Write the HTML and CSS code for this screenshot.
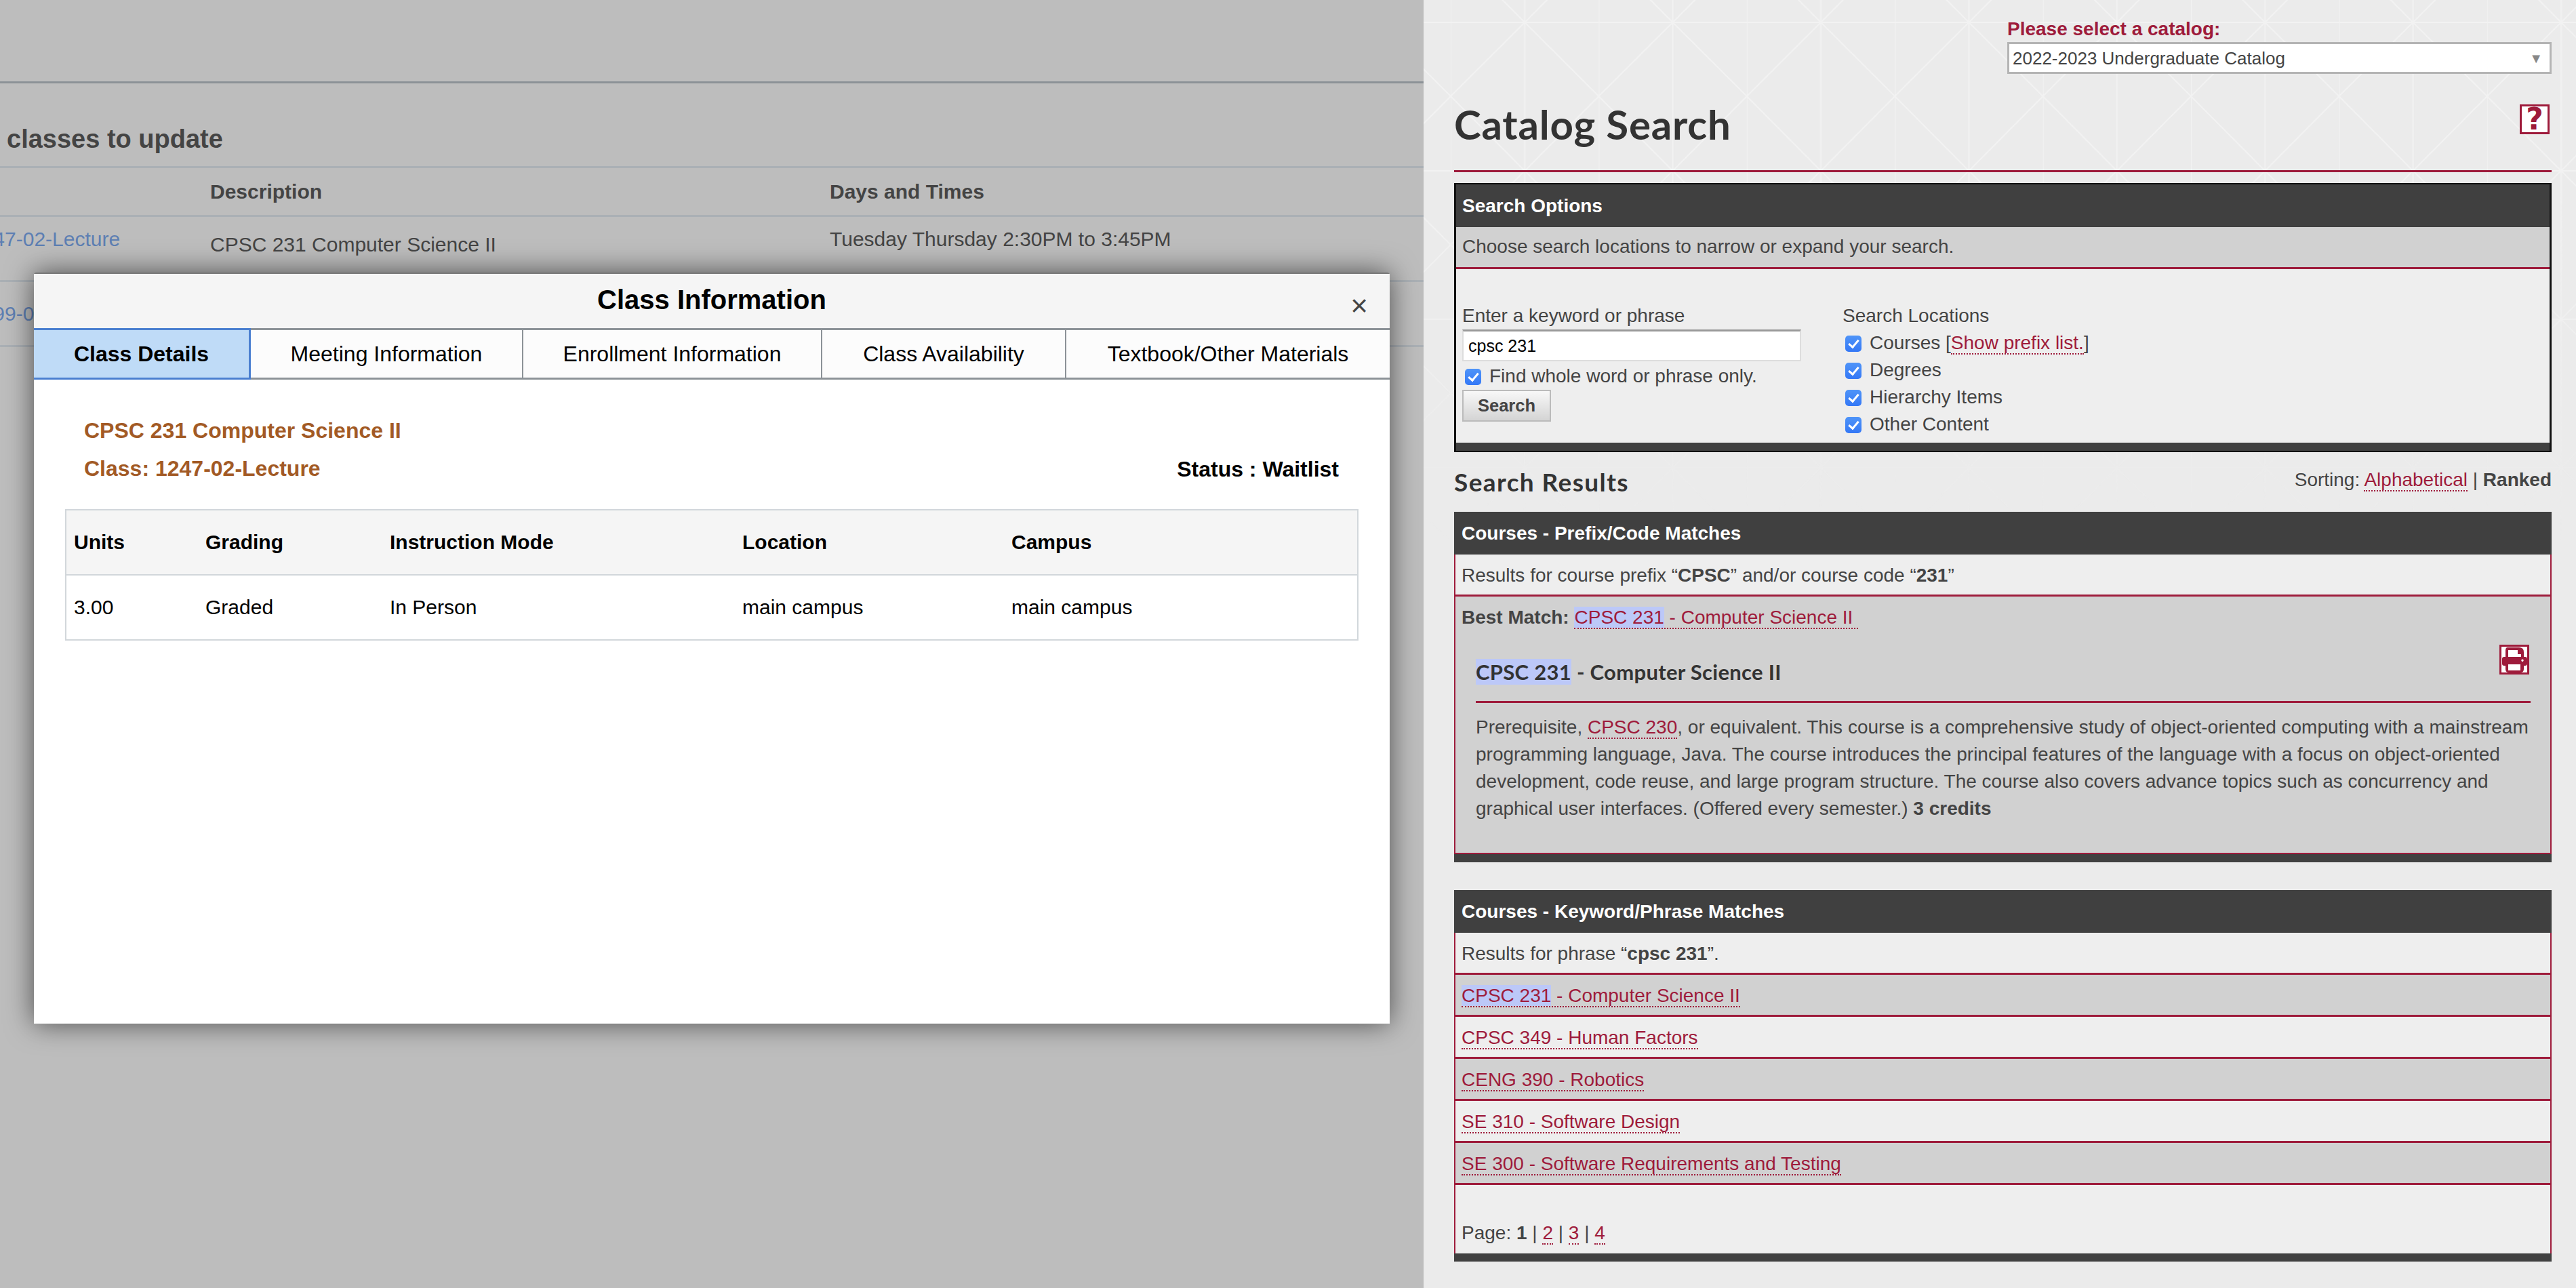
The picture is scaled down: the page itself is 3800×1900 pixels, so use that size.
FILE: index.html

```html
<!DOCTYPE html>
<html lang="en">
<head>
<meta charset="utf-8"/>
<title>Catalog Search</title>
<link rel="stylesheet" href="styles.css">
</head>
<body>
<div class="page">

  <!-- dimmed registration page behind the dialog -->
  <section class="schedule">
    <div class="schedule-top"></div>
    <h2 class="schedule-title">classes to update</h2>
    <div class="schedule-row schedule-head">
      <span></span>
      <span>Description</span>
      <span>Days and Times</span>
    </div>
    <div class="schedule-row schedule-first">
      <a>1247-02-Lecture</a>
      <span class="desc">CPSC 231 Computer Science II</span>
      <span>Tuesday Thursday 2:30PM to 3:45PM</span>
    </div>
    <div class="schedule-row">
      <a>1099-02-Lecture</a>
    </div>

    <div class="modal">
      <div class="modal-head">
        <h3>Class Information</h3>
        <span class="modal-close">×</span>
      </div>
      <div class="tabs">
        <div class="tab active">Class Details</div>
        <div class="tab">Meeting Information</div>
        <div class="tab">Enrollment Information</div>
        <div class="tab">Class Availability</div>
        <div class="tab">Textbook/Other Materials</div>
      </div>
      <div class="modal-body">
        <div class="class-name">CPSC 231 Computer Science II</div>
        <div class="class-line">
          <div class="class-name">Class: 1247-02-Lecture</div>
          <div class="class-status">Status : Waitlist</div>
        </div>
        <table class="details">
          <thead>
            <tr><th>Units</th><th>Grading</th><th>Instruction Mode</th><th>Location</th><th>Campus</th></tr>
          </thead>
          <tbody>
            <tr><td>3.00</td><td>Graded</td><td>In Person</td><td>main campus</td><td>main campus</td></tr>
          </tbody>
        </table>
      </div>
    </div>
  </section>

  <!-- catalog sidebar -->
  <aside class="catalog">
    <svg class="catalog-bg" width="1700" height="800" aria-hidden="true">
      <defs>
        <pattern id="mesh" width="218.4" height="219" patternUnits="userSpaceOnUse" x="40" y="-77">
          <g stroke="#f2f2f2" stroke-width="2" fill="none">
            <path d="M0 0H218.4M0 110H218.4M0 0V219M109.2 0V219"/>
            <path d="M0 0L109.2 110L0 219M218.4 0L109.2 110L218.4 219"/>
          </g>
        </pattern>
      </defs>
      <rect width="1700" height="800" fill="url(#mesh)"/>
    </svg>

    <div class="catalog-pick">
      <label>Please select a catalog:</label>
      <div class="fake-select"><span>2022-2023 Undergraduate Catalog</span><i>▼</i></div>
    </div>

    <div class="title-row">
      <h1>Catalog Search</h1>
      <span class="icon-box help">?</span>
    </div>

    <div class="panel panel-options">
      <div class="panel-head">Search Options</div>
      <div class="row row-grey">Choose search locations to narrow or expand your search.</div>
      <div class="options">
        <div class="options-left">
          <div class="line">Enter a keyword or phrase</div>
          <input class="keyword" type="text" value="cpsc 231">
          <label class="line check"><input type="checkbox" checked>Find whole word or phrase only.</label>
          <button class="btn">Search</button>
        </div>
        <div class="options-right">
          <div class="line">Search Locations</div>
          <label class="line check"><input type="checkbox" checked><span>Courses [<a class="lnk">Show prefix list.</a>]</span></label>
          <label class="line check"><input type="checkbox" checked>Degrees</label>
          <label class="line check"><input type="checkbox" checked>Hierarchy Items</label>
          <label class="line check"><input type="checkbox" checked>Other Content</label>
        </div>
      </div>
      <div class="panel-foot"></div>
    </div>

    <div class="results-head">
      <h2>Search Results</h2>
      <div class="sorting">Sorting: <a class="lnk">Alphabetical</a> | <strong>Ranked</strong></div>
    </div>

    <div class="panel">
      <div class="panel-head">Courses - Prefix/Code Matches</div>
      <div class="row">Results for course prefix “<strong>CPSC</strong>” and/or course code “<strong>231</strong>”</div>
      <div class="best">
        <div class="best-line"><strong>Best Match:</strong> <a class="lnk"><mark>CPSC 231</mark> - Computer Science II&nbsp;</a></div>
        <div class="course">
          <div class="course-head">
            <h4><mark>CPSC 231</mark> - Computer Science II</h4>
            <span class="icon-box print">
              <svg width="38" height="38" viewBox="0 0 38 38"><path fill="#9e1b3b" fill-rule="evenodd" d="M9 1H26Q33 1 33 8V15H35Q38 15 38 18V25Q38 28 35 28H33V33Q33 38 28 38H11Q6 38 6 33V28H4Q1 28 1 25V18Q1 15 4 15H6V6Q6 1 9 1ZM10 5V15H29V11H24V5ZM10 26V35H28V26ZM31 18.5A1.7 1.7 0 1 0 31.01 18.5Z"/></svg>
            </span>
          </div>
          <p>Prerequisite, <a class="lnk">CPSC 230</a>, or equivalent. This course is a comprehensive study of object-oriented computing with a mainstream programming language, Java. The course introduces the principal features of the language with a focus on object-oriented development, code reuse, and large program structure. The course also covers advance topics such as concurrency and graphical user interfaces. (Offered every semester.) <strong>3 credits</strong></p>
        </div>
      </div>
      <div class="panel-foot"></div>
    </div>

    <div class="panel panel-keyword">
      <div class="panel-head">Courses - Keyword/Phrase Matches</div>
      <div class="row">Results for phrase “<strong>cpsc 231</strong>”.</div>
      <div class="row row-grey"><a class="lnk"><mark>CPSC 231</mark> - Computer Science II</a></div>
      <div class="row"><a class="lnk">CPSC 349 - Human Factors</a></div>
      <div class="row row-grey"><a class="lnk">CENG 390 - Robotics</a></div>
      <div class="row"><a class="lnk">SE 310 - Software Design</a></div>
      <div class="row row-grey"><a class="lnk">SE 300 - Software Requirements and Testing</a></div>
      <div class="pager">Page: <strong>1</strong> | <a class="lnk">2</a> | <a class="lnk">3</a> | <a class="lnk">4</a></div>
      <div class="panel-foot"></div>
    </div>
  </aside>
</div>
</body>
</html>
```

FILE: styles.css

```css
html, body {
  margin: 0;
  height: 100%;
  overflow: hidden;
}
body {
  font-family: "Liberation Sans", Arial, sans-serif;
  font-size: 28px;
  color: #444;
}
.page {
  display: flex;
  width: 3800px;
  height: 1900px;
}

/* left side */
.schedule {
  position: relative;
  width: 2100px;
  flex: none;
  background: #bdbdbd;
  overflow: hidden;
}
.schedule-top {
  height: 120px;
  border-bottom: 3px solid #8c9297;
}
.schedule-title {
  margin: 0;
  padding: 60px 0 0 10px;
  height: 62px;
  font-size: 38px;
  line-height: 44px;
  color: #444;
}
.schedule-row {
  display: grid;
  grid-template-columns: 353px 914px 1fr;
  margin-left: -43px;
  height: 93px;
  border-bottom: 3px solid #aab0b5;
  align-items: center;
  font-size: 30px;
}
.schedule-row a { color: #5d7fb3; }
.schedule-head {
  height: 69px;
  border-top: 3px solid #aab0b5;
  font-weight: bold;
}
.schedule-first { align-items: start; }
.schedule-first > * { margin-top: 16px; }
.schedule-first .desc { margin-top: 24px; }

/* dialog */
.modal {
  position: absolute;
  left: 50px;
  top: 402px;
  width: 2000px;
  height: 1106px;
  background: #fff;
  border-top: 2px solid #777;
  border-radius: 4px 4px 0 0;
  box-shadow: 0 0 40px rgba(0, 0, 0, 0.6);
}
.modal-head {
  position: relative;
  height: 80px;
  background: #f5f5f5;
  text-align: center;
}
.modal-head h3 {
  margin: 0;
  font-size: 40px;
  line-height: 77px;
  color: #000;
}
.modal-close {
  position: absolute;
  right: 32px;
  top: 22px;
  font-size: 44px;
  line-height: 50px;
  color: #444;
}
.tabs {
  display: flex;
  height: 70px;
  border-top: 3px solid #8c9297;
  border-bottom: 3px solid #8c9297;
  background: #fcfcfc;
}
.tab {
  display: flex;
  align-items: center;
  justify-content: center;
  box-sizing: border-box;
  font-size: 32px;
  color: #000;
  border-right: 2px solid #8c9297;
}
.tab:nth-child(1) { width: 320px; }
.tab:nth-child(2) { width: 402px; }
.tab:nth-child(3) { width: 441px; }
.tab:nth-child(4) { width: 360px; }
.tab:nth-child(5) { width: 477px; border-right: 0; }
.tab.active {
  margin: -3px 0;
  background: #bfdbf7;
  border: 3px solid #4a7fd0;
  border-left: 0;
  font-weight: bold;
}
.modal-body { padding: 47px 46px 0; }
.class-name {
  font-size: 32px;
  font-weight: bold;
  line-height: 56px;
  padding-left: 28px;
  color: #a25a25;
}
.class-line {
  display: flex;
  justify-content: space-between;
}
.class-status {
  padding-right: 29px;
  font-size: 32px;
  font-weight: bold;
  line-height: 58px;
  color: #000;
}
.details {
  width: 1908px;
  margin-top: 30px;
  border-collapse: collapse;
  table-layout: fixed;
  font-size: 30px;
  color: #000;
}
.details th, .details td {
  height: 94px;
  padding: 0 0 0 11px;
  text-align: left;
  border: 2px solid #d2d7db;
  border-left: 0;
  border-right: 0;
}
.details th { background: #f5f5f5; }
.details tr > :first-child { border-left: 2px solid #d2d7db; }
.details tr > :last-child { border-right: 2px solid #d2d7db; }
.details th:nth-child(1) { width: 183px; }
.details th:nth-child(2) { width: 261px; }
.details th:nth-child(3) { width: 509px; }
.details th:nth-child(4) { width: 386px; }

/* right side */
.catalog {
  position: relative;
  flex: 1;
  padding: 0 36px 0 45px;
  background: #ebebeb;
  overflow: hidden;
}
.catalog-bg {
  position: absolute;
  left: 0;
  top: 0;
  -webkit-mask-image: linear-gradient(#000 35%, transparent);
  mask-image: linear-gradient(#000 35%, transparent);
}
.catalog > :not(svg) { position: relative; }
.catalog-pick {
  margin-left: 816px;
  padding-top: 27px;
}
.catalog-pick label {
  display: block;
  height: 35px;
  line-height: 32px;
  font-weight: bold;
  color: #9e1b3b;
}
.fake-select {
  box-sizing: border-box;
  display: flex;
  justify-content: space-between;
  align-items: center;
  height: 47px;
  padding: 2px 10px 0 5px;
  background: #fff;
  border: 3px solid #b4b4b4;
  font-size: 26px;
}
.fake-select i {
  font-style: normal;
  font-size: 20px;
  color: #888;
}
.title-row {
  display: flex;
  justify-content: space-between;
  align-items: flex-start;
  height: 142px;
  border-bottom: 3px solid #9e1b3b;
}
.title-row h1 {
  margin: 0;
  padding-top: 39px;
  font-family: Lato, sans-serif;
  font-size: 60px;
  letter-spacing: 0.8px;
  line-height: 70px;
  font-weight: 700;
  color: #333;
}
.icon-box {
  box-sizing: border-box;
  display: flex;
  align-items: center;
  justify-content: center;
  width: 44px;
  height: 44px;
  background: #fff;
  border: 3px solid #9e1b3b;
}
.help {
  margin: 45px 3px 0 0;
  font-family: "DejaVu Sans", sans-serif;
  font-size: 44px;
  line-height: 38px;
  font-weight: bold;
  color: #9e1b3b;
}

.panel {
  width: 1619px;
  border-left: 2px solid #9e1b3b;
  border-right: 2px solid #9e1b3b;
  box-sizing: border-box;
}
.panel-head {
  height: 63px;
  margin: 0 -2px;
  padding: 0 11px;
  background: #404040;
  color: #fff;
  font-weight: bold;
  line-height: 63px;
}
.panel-foot {
  height: 12px;
  margin: 0 -2px;
  background: #404040;
}
.row {
  box-sizing: border-box;
  height: 62px;
  padding: 0 9px;
  background: #eee;
  line-height: 62px;
  border-bottom: 3px solid #9e1b3b;
}
.row-grey { background: #d1d1d1; }
.panel-options {
  margin-top: 16px;
  border: 3px solid #111;
  border-bottom: 2px solid #111;
  border-top-width: 2px;
}
.panel-options .row { line-height: 58px; }
.panel-options .panel-head, .panel-options .panel-foot { margin: 0; padding-left: 9px; }
.options {
  display: flex;
  height: 256px;
  box-sizing: border-box;
  padding: 49px 0 0 9px;
  background: #eee;
}
.options-left { width: 561px; }
.line {
  display: flex;
  align-items: center;
  height: 40px;
}
.check input {
  appearance: none;
  -webkit-appearance: none;
  position: relative;
  flex: none;
  box-sizing: border-box;
  width: 24px;
  height: 24px;
  margin: 2px 12px 0 4px;
  border-radius: 5px;
  background: linear-gradient(#4f94f8, #3478f6);
}
.check input::before {
  content: "";
  position: absolute;
  left: 8px;
  top: 3px;
  width: 6px;
  height: 12px;
  border: solid #fff;
  border-width: 0 3px 3px 0;
  transform: rotate(40deg);
}
.keyword {
  display: block;
  box-sizing: border-box;
  width: 500px;
  height: 47px;
  padding: 0 7px;
  background: #fff;
  border: 0;
  border-top: 3px solid #999;
  border-left: 2px solid #ddd;
  border-right: 2px solid #ddd;
  border-bottom: 2px solid #ddd;
  font: 25px "Liberation Sans", sans-serif;
  color: #000;
}
.options-left .check { margin-top: 2px; }
.btn {
  display: block;
  width: 131px;
  height: 47px;
  margin-top: 0;
  padding: 0;
  border: 2px solid #bbb;
  background: linear-gradient(#f8f8f8, #d4d4d4);
  font: bold 25.5px "Liberation Sans", sans-serif;
  color: #444;
}
.lnk {
  color: #9e1b3b;
  border-bottom: 2px dotted #9e1b3b;
}
mark {
  background: #bcc8f8;
  color: inherit;
}
.results-head {
  display: flex;
  justify-content: space-between;
  width: 1619px;
  height: 88px;
}
.results-head h2 {
  margin: 0;
  padding-top: 23px;
  font-family: Lato, sans-serif;
  font-size: 37px;
  letter-spacing: 1.4px;
  line-height: 42px;
  color: #333;
}
.sorting { padding-top: 24px; line-height: 34px; }
.best {
  height: 380px;
  box-sizing: border-box;
  padding: 10px 9px 0;
  background: #d1d1d1;
  border-bottom: 2px solid #9e1b3b;
}
.best-line { line-height: 42px; }
.course { padding: 19px 20px 0 21px; }
.course-head {
  display: flex;
  justify-content: space-between;
  align-items: flex-start;
  height: 83px;
  border-bottom: 3px solid #9e1b3b;
}
.course-head h4 {
  margin: 19px 0 0;
  font-family: Lato, sans-serif;
  font-size: 31px;
  letter-spacing: 0.3px;
  line-height: 42px;
  color: #333;
}
.print { margin-right: 2px; }
.course p {
  margin: 16px 0 0;
  line-height: 40px;
}
.panel-keyword { margin-top: 41px; }
.pager {
  box-sizing: border-box;
  height: 101px;
  padding: 53px 9px 0;
  background: #eee;
  line-height: 36px;
}
```
